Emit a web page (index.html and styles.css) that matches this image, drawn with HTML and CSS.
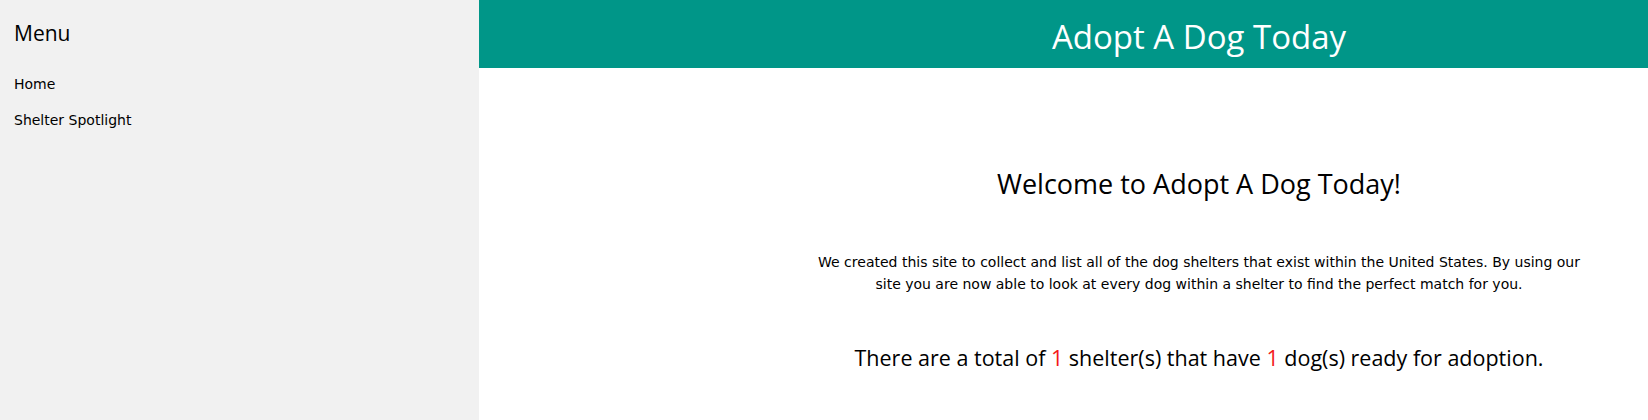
FILE: index.html
```html
<!DOCTYPE html>
<html>
<head>
<meta charset="utf-8">
<link rel="stylesheet" href="styles.css">
</head>
<body>
<div class="page">
  <nav class="sidebar">
    <h3 class="menu-title">Menu</h3>
    <a class="nav-link" href="#">Home</a>
    <a class="nav-link" href="#">Shelter Spotlight</a>
  </nav>
  <div class="main">
    <header class="header">
      <h1 class="site-title">Adopt A Dog Today</h1>
    </header>
    <section class="content">
      <h2 class="welcome">Welcome to Adopt A Dog Today!</h2>
      <p class="intro">We created this site to collect and list all of the dog shelters that exist within the United States. By using our site you are now able to look at every dog within a shelter to find the perfect match for you.</p>
      <p class="stats">There are a total of <span class="num">1</span> shelter(s) that have <span class="num">1</span> dog(s) ready for adoption.</p>
    </section>
  </div>
</div>
</body>
</html>
```
FILE: styles.css
```css
html, body {
  margin: 0;
  padding: 0;
}
body {
  font-family: "DejaVu Sans", Verdana, sans-serif;
  font-size: 14px;
  color: #000;
  background: #fff;
}
.page {
  display: flex;
  min-height: 420px;
}
.sidebar {
  width: 479px;
  flex: none;
  background: #f1f1f1;
  display: flex;
  flex-direction: column;
  padding: 0 14px;
  box-sizing: border-box;
}
.menu-title {
  font-family: "Open Sans", sans-serif;
  font-weight: 400;
  font-size: 21px;
  margin: 18px 0 26px;
  line-height: 30px;
}
.nav-link {
  color: #000;
  text-decoration: none;
  font-size: 14px;
  line-height: 20px;
  margin-bottom: 16px;
}
.main {
  flex: 1;
  display: flex;
  flex-direction: column;
}
.header {
  background: #009688;
  height: 68px;
  padding-left: 271px;
  padding-top: 5px;
  box-sizing: border-box;
  display: flex;
  align-items: center;
  justify-content: center;
}
.site-title {
  margin: 0;
  color: #fff;
  font-family: "Open Sans", sans-serif;
  font-weight: 400;
  font-size: 33px;
  line-height: 42px;
}
.content {
  padding-left: 271px;
  text-align: center;
}
.welcome {
  font-family: "Open Sans", sans-serif;
  font-weight: 400;
  font-size: 27px;
  line-height: 36px;
  margin: 98px 0 0;
}
.intro {
  margin: 49px auto 0;
  max-width: 790px;
  font-size: 14px;
  line-height: 22px;
}
.stats {
  font-family: "Open Sans", sans-serif;
  font-size: 21.5px;
  line-height: 32px;
  margin: 47px 0 0;
}
.num {
  color: #f41a1a;
}
```
